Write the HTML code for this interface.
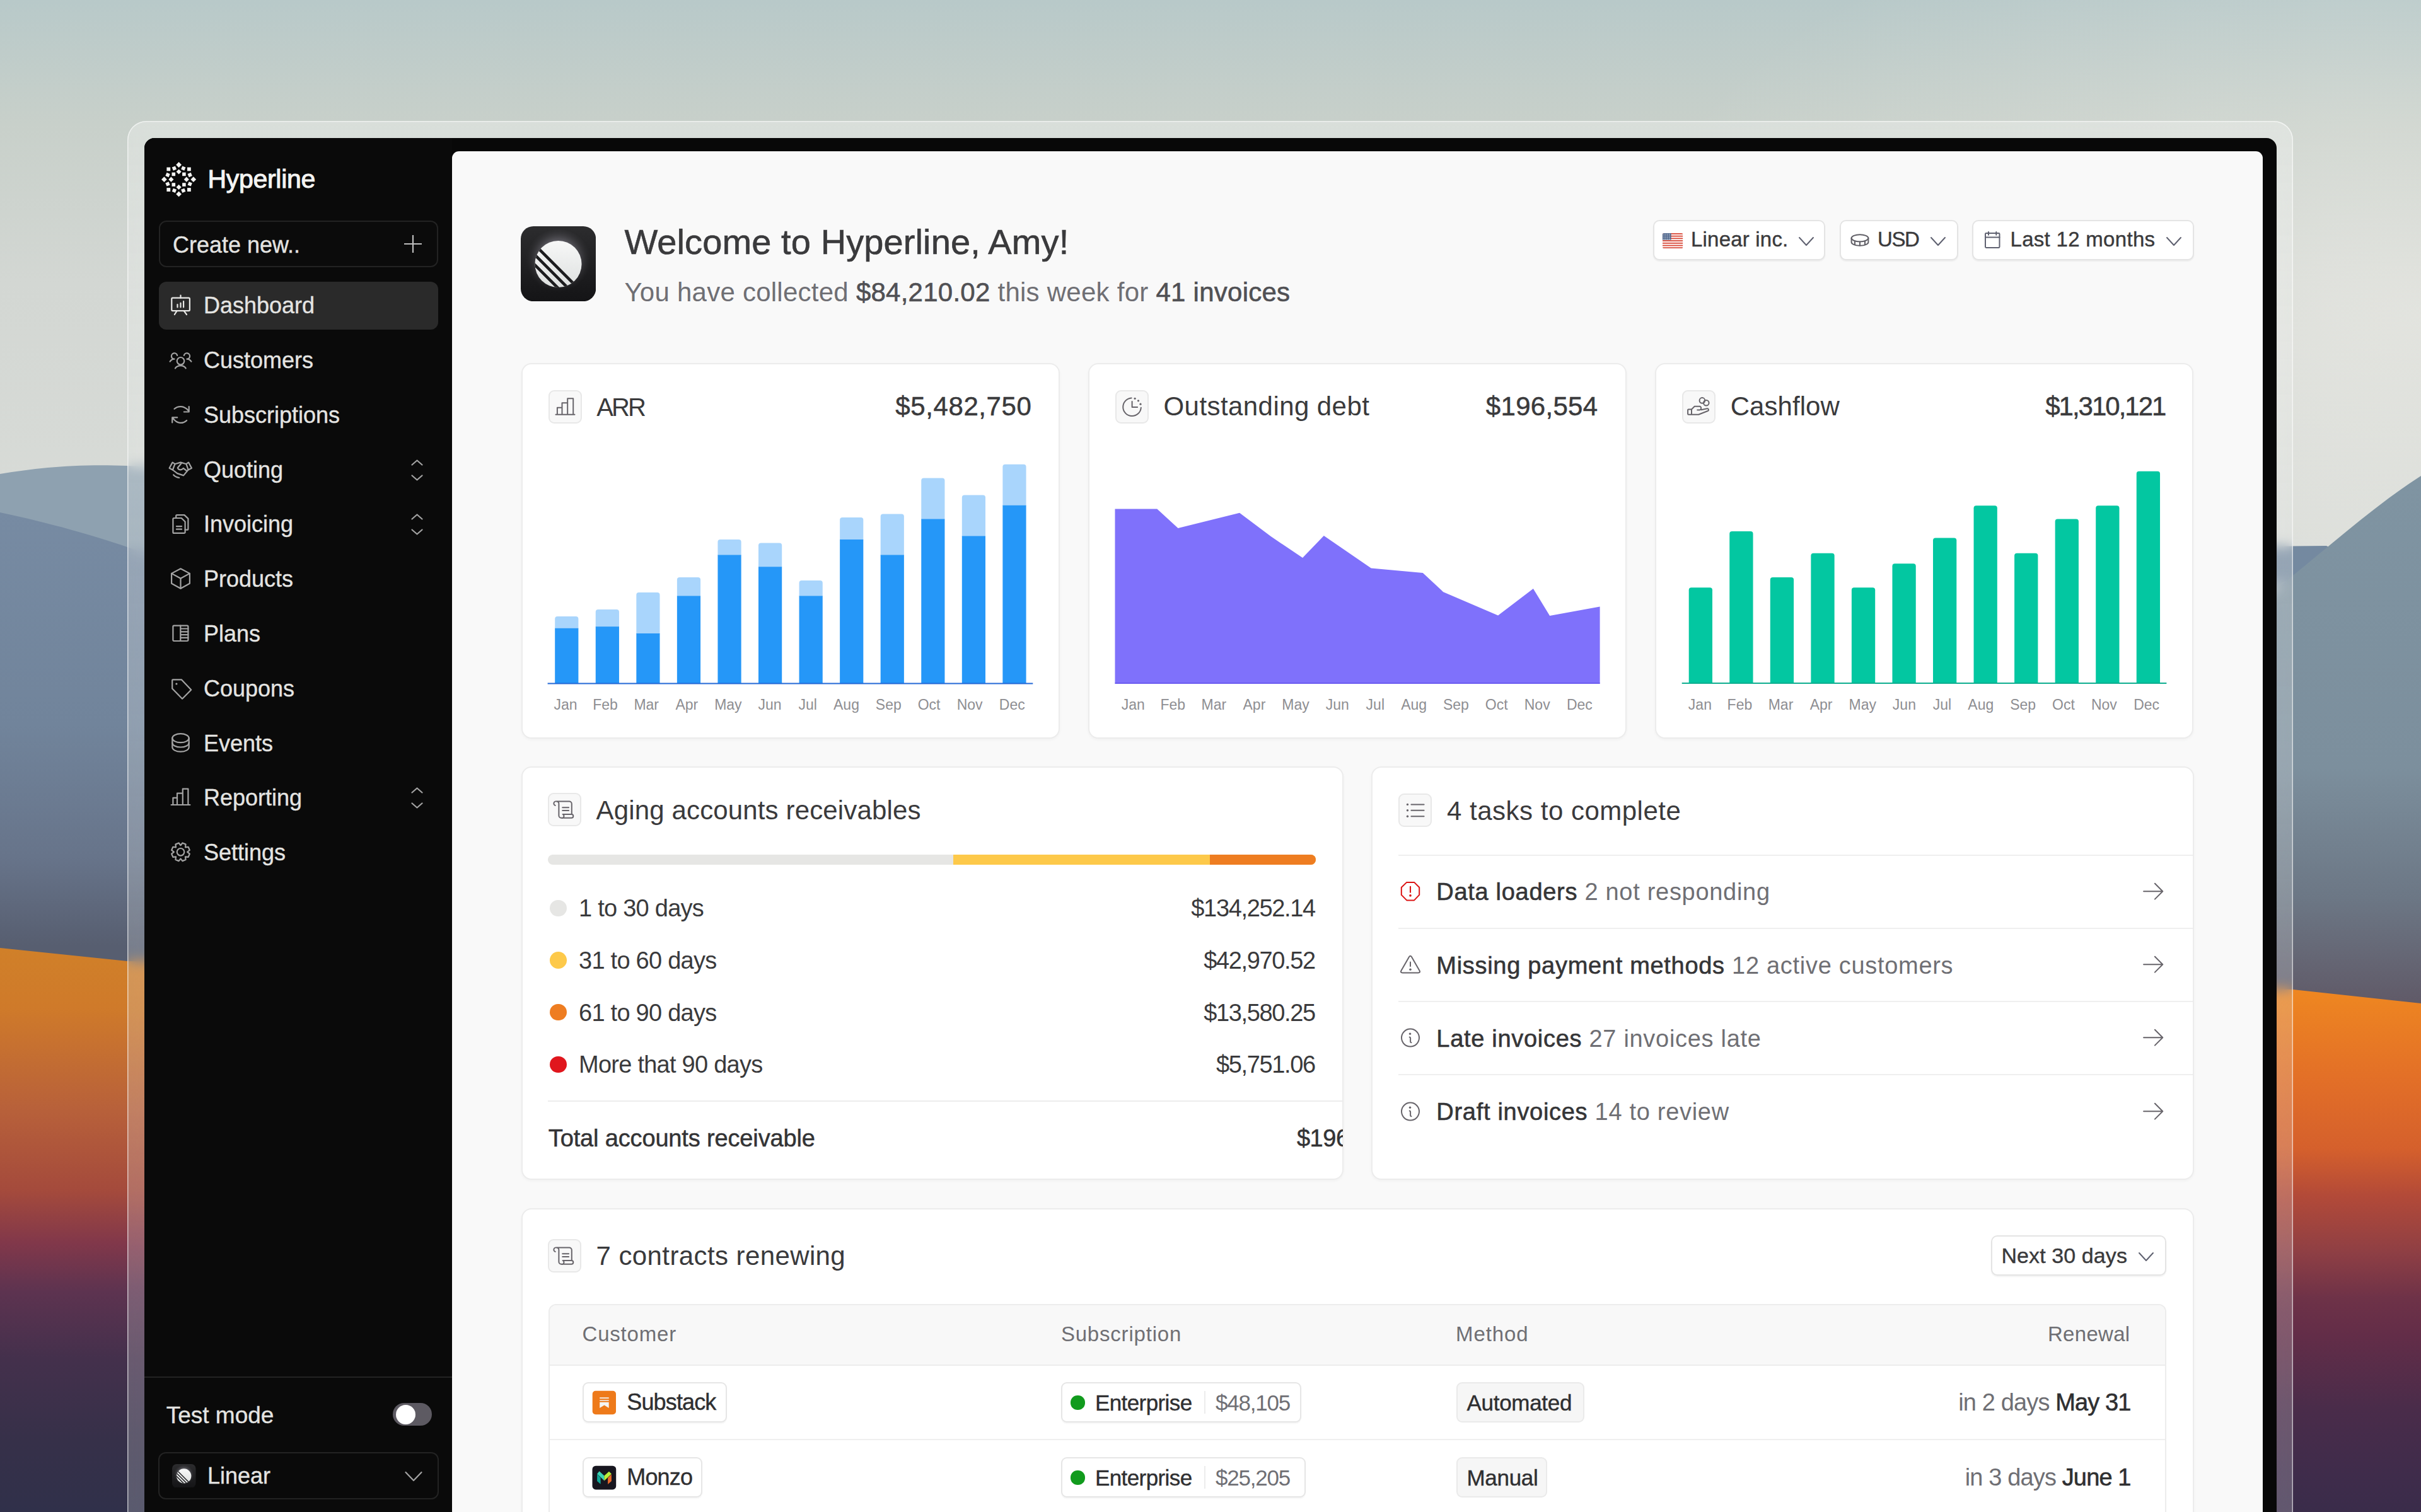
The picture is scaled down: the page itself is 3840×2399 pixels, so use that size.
<!DOCTYPE html>
<html><head><meta charset="utf-8">
<style>
*{box-sizing:border-box;margin:0;padding:0}
html,body{width:3840px;height:2399px;overflow:hidden;position:relative;font-family:"Liberation Sans",sans-serif;background:#c8d0cc}
.abs{position:absolute}
.t{position:absolute;white-space:nowrap}
#frame{position:absolute;left:202px;top:192px;width:3435px;height:2400px;border-radius:30px;background:linear-gradient(rgba(242,244,242,0.4),rgba(228,231,230,0.3) 700px,rgba(225,228,228,0.24) 1400px);backdrop-filter:blur(10px);-webkit-backdrop-filter:blur(10px);box-shadow:inset 0 0 0 1.5px rgba(255,255,255,0.6)}
#black{position:absolute;left:229px;top:219px;width:3382px;height:2400px;border-radius:16px;background:#080808}
#side{position:absolute;left:229px;top:219px;width:488px;height:2200px;background:#0a0a0a;border-radius:16px 0 0 0}
#main{position:absolute;left:717px;top:240px;width:2872px;height:2400px;border-radius:11px 11px 0 0;background:#f9f9f9}
</style></head><body>
<svg class="abs" style="left:0;top:0" width="3840" height="2399" viewBox="0 0 3840 2399">
<defs>
<linearGradient id="sky" gradientUnits="userSpaceOnUse" x1="0" y1="0" x2="0" y2="900">
<stop offset="0" stop-color="#b8c9c9"/><stop offset="0.22" stop-color="#c8d0ca"/><stop offset="0.5" stop-color="#d3d7d3"/><stop offset="1" stop-color="#d9dcd8"/>
</linearGradient>
<radialGradient id="skyr" gradientUnits="userSpaceOnUse" cx="3840" cy="500" r="1300" gradientTransform="translate(3840 500) scale(1 0.55) translate(-3840 -500)">
<stop offset="0" stop-color="#f4f2ec" stop-opacity="0.45"/><stop offset="0.6" stop-color="#f4f2ec" stop-opacity="0.15"/><stop offset="1" stop-color="#f4f2ec" stop-opacity="0"/>
</radialGradient>
<linearGradient id="hillL" gradientUnits="userSpaceOnUse" x1="0" y1="800" x2="0" y2="1500">
<stop offset="0" stop-color="#778ba3"/><stop offset="0.5" stop-color="#71849b"/><stop offset="0.8" stop-color="#67748a"/><stop offset="1" stop-color="#575e70"/>
</linearGradient>
<linearGradient id="hillR" gradientUnits="userSpaceOnUse" x1="0" y1="760" x2="0" y2="1590">
<stop offset="0" stop-color="#7f94a2"/><stop offset="0.55" stop-color="#7c8f9d"/><stop offset="0.8" stop-color="#6c7785"/><stop offset="1" stop-color="#605a68"/>
</linearGradient>
<linearGradient id="duneL" gradientUnits="userSpaceOnUse" x1="0" y1="1500" x2="0" y2="2399">
<stop offset="0" stop-color="#d08029"/><stop offset="0.111" stop-color="#cf7a2a"/><stop offset="0.287" stop-color="#b8613a"/><stop offset="0.434" stop-color="#a44a3c"/><stop offset="0.523" stop-color="#82384a"/><stop offset="0.611" stop-color="#5d3350"/><stop offset="0.729" stop-color="#44304c"/><stop offset="0.875" stop-color="#363049"/><stop offset="1" stop-color="#30304a"/>
</linearGradient>
<linearGradient id="duneR" gradientUnits="userSpaceOnUse" x1="0" y1="1575" x2="0" y2="2399">
<stop offset="0" stop-color="#ee8621"/><stop offset="0.159" stop-color="#e37027"/><stop offset="0.30" stop-color="#d5602c"/><stop offset="0.39" stop-color="#b34a38"/><stop offset="0.498" stop-color="#8f3f44"/><stop offset="0.589" stop-color="#6e3248"/><stop offset="0.659" stop-color="#632d48"/><stop offset="0.80" stop-color="#4a2c4a"/><stop offset="0.929" stop-color="#3f2c4b"/><stop offset="1" stop-color="#3a2c4a"/>
</linearGradient>
</defs>
<rect width="3840" height="2399" fill="url(#sky)"/>
<rect x="2400" width="1440" height="1200" fill="url(#skyr)"/>
<path d="M0 752 C60 742 120 736 202 739 C400 745 600 780 800 840 L800 2399 L0 2399Z" fill="#8ea1b0"/>
<path d="M0 813 C80 830 150 850 202 868 C400 930 600 1050 800 1200 L800 2399 L0 2399Z" fill="url(#hillL)"/>
<path d="M3300 870 L3690 866 C3720 880 3700 900 3637 920 L3300 1000Z" fill="#7489a0"/>
<path d="M3000 1300 C3300 1100 3560 980 3637 913 C3700 862 3770 800 3840 755 L3840 2399 L3000 2399Z" fill="url(#hillR)"/>
<path d="M0 1504 L202 1525 L2000 1548 L2000 2399 L0 2399Z" fill="url(#duneL)"/>
<path d="M2000 1545 L3637 1570 L3840 1592 L3840 2399 L2000 2399Z" fill="url(#duneR)"/>
</svg>

<div id="frame"></div>
<div id="black"></div>
<div id="side"></div>
<div id="main"></div>
<svg class="abs" style="left:0;top:0" width="3840" height="600" viewBox="0 0 3840 600"><g fill="#f4f4f2"><rect x="280.50" y="258.40" width="6.2" height="6.2" transform="rotate(45 283.60 261.50)"/><rect x="303.70" y="281.60" width="6.2" height="6.2" transform="rotate(45 306.80 284.70)"/><rect x="280.50" y="304.80" width="6.2" height="6.2" transform="rotate(45 283.60 307.90)"/><rect x="257.30" y="281.60" width="6.2" height="6.2" transform="rotate(45 260.40 284.70)"/><rect x="297.00" y="298.10" width="5.8" height="5.8" transform="rotate(0 299.90 301.00)"/><rect x="264.40" y="298.10" width="5.8" height="5.8" transform="rotate(0 267.30 301.00)"/><rect x="297.00" y="265.50" width="5.8" height="5.8" transform="rotate(0 299.90 268.40)"/><rect x="264.40" y="265.50" width="5.8" height="5.8" transform="rotate(0 267.30 268.40)"/><rect x="288.00" y="264.30" width="5.6" height="5.6" transform="rotate(22.5 290.80 267.10)"/><rect x="273.60" y="264.30" width="5.6" height="5.6" transform="rotate(-22.5 276.40 267.10)"/><rect x="288.00" y="299.50" width="5.6" height="5.6" transform="rotate(-22.5 290.80 302.30)"/><rect x="273.60" y="299.50" width="5.6" height="5.6" transform="rotate(22.5 276.40 302.30)"/><rect x="298.40" y="289.10" width="5.6" height="5.6" transform="rotate(22.5 301.20 291.90)"/><rect x="298.40" y="274.70" width="5.6" height="5.6" transform="rotate(-22.5 301.20 277.50)"/><rect x="263.20" y="289.10" width="5.6" height="5.6" transform="rotate(-22.5 266.00 291.90)"/><rect x="263.20" y="274.70" width="5.6" height="5.6" transform="rotate(22.5 266.00 277.50)"/><rect x="280.70" y="269.60" width="5.8" height="5.8" transform="rotate(45 283.60 272.50)"/><rect x="292.90" y="281.80" width="5.8" height="5.8" transform="rotate(45 295.80 284.70)"/><rect x="280.70" y="294.00" width="5.8" height="5.8" transform="rotate(45 283.60 296.90)"/><rect x="268.50" y="281.80" width="5.8" height="5.8" transform="rotate(45 271.40 284.70)"/><rect x="289.10" y="290.20" width="5.6" height="5.6" transform="rotate(0 291.90 293.00)"/><rect x="272.50" y="290.20" width="5.6" height="5.6" transform="rotate(0 275.30 293.00)"/><rect x="289.10" y="273.60" width="5.6" height="5.6" transform="rotate(0 291.90 276.40)"/><rect x="272.50" y="273.60" width="5.6" height="5.6" transform="rotate(0 275.30 276.40)"/></g></svg>
<div class="t" style="top:263.7px;font-size:41px;line-height:41px;color:#f4f4f2;letter-spacing:-0.3px;left:329.5px;-webkit-text-stroke:1px #f4f4f2">Hyperline</div>
<div class="abs" style="left:252.0px;top:350.0px;width:443.0px;height:74.0px;border:2px solid #232323;border-radius:12px;background:#0b0b0b"></div>
<div class="t" style="top:370.5px;font-size:36px;line-height:36px;color:#e4e4e2;left:274.0px;-webkit-text-stroke:0.35px #e4e4e2">Create new..</div>
<svg class="abs" style="left:639.0px;top:371.0px;" width="32" height="32" viewBox="0 0 32 32"><path d="M16 2V30M2 16H30" stroke="#bdbdbd" stroke-width="2.2" fill="none"/></svg>
<div class="abs" style="left:252.0px;top:447.0px;width:443.0px;height:76.0px;background:#2a2a2a;border-radius:12px"></div>
<svg class="abs" style="left:262.0px;top:460.0px;" width="50" height="50" viewBox="0 0 50 50"><g fill="none" stroke="#e8e8e6" stroke-width="2.2" stroke-linecap="round" stroke-linejoin="round"><rect x="10.3" y="12.7" width="28.6" height="20.4" rx="1.5"/><path d="M24.5 8.6V12.7M19.5 23.1V27.4M24.5 20.8V27.4M29.1 18V27.4M18.5 33.4L14.9 39M29.8 33.4L34 39"/></g></svg>
<div class="t" style="top:467.1px;font-size:36px;line-height:36px;color:#e4e4e2;left:323.0px;-webkit-text-stroke:0.35px #e4e4e2">Dashboard</div>
<svg class="abs" style="left:262.0px;top:547.0px;" width="50" height="50" viewBox="0 0 50 50"><g fill="none" stroke="#a3a3a3" stroke-width="2.2" stroke-linecap="round" stroke-linejoin="round"><circle cx="24.5" cy="25.8" r="5.8"/><path d="M15.9 37.4C18 34.5 21 33.2 24.5 33.2C28 33.2 31 34.5 32.7 37.4"/><path d="M19.2 16.9A4.7 4.7 0 1 0 14.6 22.7C11.6 22.7 9.3 24.2 7.6 26.6"/><path d="M29.8 16.9A4.7 4.7 0 1 1 34.4 22.7C37.4 22.7 39.7 24.2 41.4 26.6"/></g></svg>
<div class="t" style="top:553.9px;font-size:36px;line-height:36px;color:#e4e4e2;left:323.0px;-webkit-text-stroke:0.35px #e4e4e2">Customers</div>
<svg class="abs" style="left:262.0px;top:634.0px;" width="50" height="50" viewBox="0 0 50 50"><g fill="none" stroke="#a3a3a3" stroke-width="2.2" stroke-linecap="round" stroke-linejoin="round"><path d="M14.5 14.8C20.5 9.5 30 9.5 36.5 17.2M37.7 11.2V19.5H29.8"/><path d="M34.1 33.1C28 38.8 18.5 38.5 12.6 29.9M11.2 36.4V28.4H19.2"/></g></svg>
<div class="t" style="top:640.7px;font-size:36px;line-height:36px;color:#e4e4e2;left:323.0px;-webkit-text-stroke:0.35px #e4e4e2">Subscriptions</div>
<svg class="abs" style="left:262.0px;top:720.0px;" width="50" height="50" viewBox="0 0 50 50"><g fill="none" stroke="#a3a3a3" stroke-width="2.2" stroke-linecap="round" stroke-linejoin="round"><path d="M11.6 13.6L6.6 22.8L11.9 25.5L15.5 16.2Z M37 13.6L42 22.8L36.6 25.5L33.4 16.2Z"/><path d="M15.5 16.2L24.5 13.6L33.4 16.2"/><path d="M25.5 15.3L19.8 22.3C20.8 26.2 26 26.2 28.8 23L34.7 27.4"/><path d="M11.9 25.5L19.2 31.1L29.1 34.4L36.4 25.5"/><path d="M13.2 33.4C15.5 36 18.5 37.3 22.2 38"/></g></svg>
<div class="t" style="top:727.5px;font-size:36px;line-height:36px;color:#e4e4e2;left:323.0px;-webkit-text-stroke:0.35px #e4e4e2">Quoting</div>
<svg class="abs" style="left:650.5px;top:728.5px;" width="21" height="34" viewBox="0 0 21 34"><path d="M2.5 8.5L10.5 1.5L18.5 8.5M2.5 25.5L10.5 32.5L18.5 25.5" fill="none" stroke="#a3a3a3" stroke-width="2.2" stroke-linecap="round" stroke-linejoin="round"/></svg>
<svg class="abs" style="left:262.0px;top:807.0px;" width="50" height="50" viewBox="0 0 50 50"><g fill="none" stroke="#a3a3a3" stroke-width="2.2" stroke-linecap="round" stroke-linejoin="round"><path d="M12.4 16.5V37.4A1.5 1.5 0 0 0 13.9 38.9H30.1A1.5 1.5 0 0 0 31.6 37.4V20.8L25.8 15H13.9A1.5 1.5 0 0 0 12.4 16.5Z"/><path d="M17.2 15V11.6A1.5 1.5 0 0 1 18.7 10.1H30.4L36.4 15.9V32.2A1.5 1.5 0 0 1 34.9 33.7H31.6"/><path d="M17.9 28.1H26.1M17.9 32.7H26.1"/></g></svg>
<div class="t" style="top:814.3px;font-size:36px;line-height:36px;color:#e4e4e2;left:323.0px;-webkit-text-stroke:0.35px #e4e4e2">Invoicing</div>
<svg class="abs" style="left:650.5px;top:815.3px;" width="21" height="34" viewBox="0 0 21 34"><path d="M2.5 8.5L10.5 1.5L18.5 8.5M2.5 25.5L10.5 32.5L18.5 25.5" fill="none" stroke="#a3a3a3" stroke-width="2.2" stroke-linecap="round" stroke-linejoin="round"/></svg>
<svg class="abs" style="left:262.0px;top:894.0px;" width="50" height="50" viewBox="0 0 50 50"><g fill="none" stroke="#a3a3a3" stroke-width="2.2" stroke-linecap="round" stroke-linejoin="round"><path d="M24.5 8.3L38.9 15.9V31.7L24.5 39.7L10.1 31.7V15.9Z"/><path d="M10.1 15.9L24.5 23.8L38.9 15.9M24.5 23.8V39.7"/></g></svg>
<div class="t" style="top:901.1px;font-size:36px;line-height:36px;color:#e4e4e2;left:323.0px;-webkit-text-stroke:0.35px #e4e4e2">Products</div>
<svg class="abs" style="left:262.0px;top:981.0px;" width="50" height="50" viewBox="0 0 50 50"><g fill="none" stroke="#a3a3a3" stroke-width="2.2" stroke-linecap="round" stroke-linejoin="round"><rect x="12.4" y="11.7" width="24" height="24.3" rx="1.5"/><path d="M24.3 11.7V36M24.3 16.5H36.4M24.3 21.3H36.4M24.3 26.1H36.4M24.3 30.8H36.4"/></g></svg>
<div class="t" style="top:987.9px;font-size:36px;line-height:36px;color:#e4e4e2;left:323.0px;-webkit-text-stroke:0.35px #e4e4e2">Plans</div>
<svg class="abs" style="left:262.0px;top:1068.0px;" width="50" height="50" viewBox="0 0 50 50"><g fill="none" stroke="#a3a3a3" stroke-width="2.2" stroke-linecap="round" stroke-linejoin="round"><path d="M11.2 11.3A1 1 0 0 1 12.2 10.3H25.8L41.2 26.5L27.1 40.7L11.2 24.5Z"/><circle cx="17.9" cy="17" r="1.6" fill="#a3a3a3" stroke="none"/></g></svg>
<div class="t" style="top:1074.7px;font-size:36px;line-height:36px;color:#e4e4e2;left:323.0px;-webkit-text-stroke:0.35px #e4e4e2">Coupons</div>
<svg class="abs" style="left:262.0px;top:1155.0px;" width="50" height="50" viewBox="0 0 50 50"><g fill="none" stroke="#a3a3a3" stroke-width="2.2" stroke-linecap="round" stroke-linejoin="round"><ellipse cx="24.5" cy="16.2" rx="13.2" ry="7"/><path d="M11.3 16.2V30.6C11.3 34.5 17.2 37.7 24.5 37.7C31.8 37.7 37.7 34.5 37.7 30.6V16.2"/><path d="M11.3 23.4C11.3 27.3 17.2 30.5 24.5 30.5C31.8 30.5 37.7 27.3 37.7 23.4"/></g></svg>
<div class="t" style="top:1161.5px;font-size:36px;line-height:36px;color:#e4e4e2;left:323.0px;-webkit-text-stroke:0.35px #e4e4e2">Events</div>
<svg class="abs" style="left:262.0px;top:1242.0px;" width="50" height="50" viewBox="0 0 50 50"><g fill="none" stroke="#a3a3a3" stroke-width="2.2" stroke-linecap="round" stroke-linejoin="round"><path d="M9.6 35H39.4M12.4 35V23.8H19V35M19 35V16.7H27.8V35M27.8 35V9.6H36.4V35"/></g></svg>
<div class="t" style="top:1248.3px;font-size:36px;line-height:36px;color:#e4e4e2;left:323.0px;-webkit-text-stroke:0.35px #e4e4e2">Reporting</div>
<svg class="abs" style="left:650.5px;top:1249.3px;" width="21" height="34" viewBox="0 0 21 34"><path d="M2.5 8.5L10.5 1.5L18.5 8.5M2.5 25.5L10.5 32.5L18.5 25.5" fill="none" stroke="#a3a3a3" stroke-width="2.2" stroke-linecap="round" stroke-linejoin="round"/></svg>
<svg class="abs" style="left:262.0px;top:1328.0px;" width="50" height="50" viewBox="0 0 50 50"><g fill="none" stroke="#a3a3a3" stroke-width="2.2" stroke-linecap="round" stroke-linejoin="round"><circle cx="24.5" cy="23.8" r="5.8"/><path d="M24.50 13.20 L27.41 9.49 L32.56 11.63 L32.00 16.30 L36.67 15.74 L38.81 20.89 L35.10 23.80 L38.81 26.71 L36.67 31.86 L32.00 31.30 L32.56 35.97 L27.41 38.11 L24.50 34.40 L21.59 38.11 L16.44 35.97 L17.00 31.30 L12.33 31.86 L10.19 26.71 L13.90 23.80 L10.19 20.89 L12.33 15.74 L17.00 16.30 L16.44 11.63 L21.59 9.49Z"/></g></svg>
<div class="t" style="top:1335.1px;font-size:36px;line-height:36px;color:#e4e4e2;left:323.0px;-webkit-text-stroke:0.35px #e4e4e2">Settings</div>
<div class="abs" style="left:229.0px;top:2184.0px;width:488.0px;height:2.0px;background:#232323"></div>
<div class="t" style="top:2226.5px;font-size:37px;line-height:37px;color:#e4e4e2;left:263.7px;-webkit-text-stroke:0.35px #e4e4e2">Test mode</div>
<div class="abs" style="left:623.0px;top:2226.0px;width:62.0px;height:36.0px;background:#5d5a62;border-radius:18px"></div>
<div class="abs" style="left:628.0px;top:2229.0px;width:31.0px;height:31.0px;background:#ffffff;border-radius:50%"></div>
<div class="abs" style="left:251.0px;top:2304.0px;width:445.0px;height:75.0px;border:2px solid #232323;border-radius:12px"></div>
<svg class="abs" style="left:273.0px;top:2322.7px;" width="37.5" height="37.5" viewBox="0 0 119 119"><defs><linearGradient id="lga" x1="0" y1="0" x2="0" y2="1"><stop offset="0" stop-color="#2c2c2e"/><stop offset="1" stop-color="#141416"/></linearGradient>
<radialGradient id="rga" cx="0.5" cy="0.45" r="0.5"><stop offset="0.55" stop-color="#6a6870" stop-opacity="0.8"/><stop offset="1" stop-color="#2a2a2c" stop-opacity="0"/></radialGradient>
<linearGradient id="cga" x1="0" y1="0" x2="0" y2="1"><stop offset="0" stop-color="#ffffff"/><stop offset="1" stop-color="#d6d9d8"/></linearGradient>
<clipPath id="cca"><circle cx="59.4" cy="59.9" r="37"/></clipPath></defs>
<rect width="119" height="119" rx="22.2" fill="url(#lga)"/>
<circle cx="59.4" cy="57" r="52" fill="url(#rga)"/>
<g clip-path="url(#cca)"><rect width="119" height="119" fill="url(#cga)"/>
<g stroke="#1c1c1e" stroke-width="4.6" transform="rotate(45 59.4 59.9)">
<path d="M0 64.65 H119 M0 75.85 H119 M0 87.05 H119"/></g></g></svg>
<div class="t" style="top:2324.1px;font-size:36px;line-height:36px;color:#e4e4e2;left:329.0px;-webkit-text-stroke:0.35px #e4e4e2">Linear</div>
<svg class="abs" style="left:641.0px;top:2333.0px;" width="30" height="20" viewBox="0 0 30 20"><path d="M2.5 3L15 16L27.5 3" fill="none" stroke="#a3a3a3" stroke-width="2.2" stroke-linecap="round" stroke-linejoin="round"/></svg>

<svg class="abs" style="left:825.8px;top:358.9px;" width="119.2" height="119.2" viewBox="0 0 119 119"><defs><linearGradient id="lgh" x1="0" y1="0" x2="0" y2="1"><stop offset="0" stop-color="#2c2c2e"/><stop offset="1" stop-color="#141416"/></linearGradient>
<radialGradient id="rgh" cx="0.5" cy="0.45" r="0.5"><stop offset="0.55" stop-color="#6a6870" stop-opacity="0.8"/><stop offset="1" stop-color="#2a2a2c" stop-opacity="0"/></radialGradient>
<linearGradient id="cgh" x1="0" y1="0" x2="0" y2="1"><stop offset="0" stop-color="#ffffff"/><stop offset="1" stop-color="#d6d9d8"/></linearGradient>
<clipPath id="cch"><circle cx="59.4" cy="59.9" r="37"/></clipPath></defs>
<rect width="119" height="119" rx="20.0" fill="url(#lgh)"/>
<circle cx="59.4" cy="57" r="52" fill="url(#rgh)"/>
<g clip-path="url(#cch)"><rect width="119" height="119" fill="url(#cgh)"/>
<g stroke="#1c1c1e" stroke-width="4.6" transform="rotate(45 59.4 59.9)">
<path d="M0 64.65 H119 M0 75.85 H119 M0 87.05 H119"/></g></g></svg>
<div class="t" style="top:356.2px;font-size:56px;line-height:56px;color:#3a3a3c;letter-spacing:0.1px;left:990.4px;-webkit-text-stroke:0.6px #3a3a3c">Welcome to Hyperline, Amy!</div>
<div class="t" style="top:442.6px;font-size:42px;line-height:42px;color:#6f6f74;letter-spacing:0.25px;left:990.4px;">You have collected <span style="color:#505054;-webkit-text-stroke:0.6px #505054">$84,210.02</span> this week for <span style="color:#505054;-webkit-text-stroke:0.6px #505054">41 invoices</span></div>
<div class="abs" style="left:2622.0px;top:349.0px;width:273.0px;height:64.0px;background:#ffffff;border:2px solid #e4e4e4;border-radius:10px;box-shadow:0 2px 2px rgba(0,0,0,0.05)"></div>
<svg class="abs" style="left:2637.2px;top:370.2px;" width="32.4" height="24.2" viewBox="0 0 32.4 24.2"><clipPath id="fc"><rect width="32.4" height="24.2" rx="2.5"/></clipPath><g clip-path="url(#fc)"><rect x="0" y="0" width="32.4" height="24.2" rx="2" fill="#fff"/><rect x="0" y="0.00" width="32.4" height="1.86" fill="#d94a3a"/><rect x="0" y="3.72" width="32.4" height="1.86" fill="#d94a3a"/><rect x="0" y="7.44" width="32.4" height="1.86" fill="#d94a3a"/><rect x="0" y="11.16" width="32.4" height="1.86" fill="#d94a3a"/><rect x="0" y="14.88" width="32.4" height="1.86" fill="#d94a3a"/><rect x="0" y="18.60" width="32.4" height="1.86" fill="#d94a3a"/><rect x="0" y="22.32" width="32.4" height="1.86" fill="#d94a3a"/><rect x="0" y="0" width="13.6" height="10.6" fill="#4a6289"/><rect x="1.6" y="1.3" width="1.3" height="1.1" fill="#fff"/><rect x="4.6" y="1.3" width="1.3" height="1.1" fill="#fff"/><rect x="7.6" y="1.3" width="1.3" height="1.1" fill="#fff"/><rect x="10.6" y="1.3" width="1.3" height="1.1" fill="#fff"/><rect x="1.6" y="3.8" width="1.3" height="1.1" fill="#fff"/><rect x="4.6" y="3.8" width="1.3" height="1.1" fill="#fff"/><rect x="7.6" y="3.8" width="1.3" height="1.1" fill="#fff"/><rect x="10.6" y="3.8" width="1.3" height="1.1" fill="#fff"/><rect x="1.6" y="6.3" width="1.3" height="1.1" fill="#fff"/><rect x="4.6" y="6.3" width="1.3" height="1.1" fill="#fff"/><rect x="7.6" y="6.3" width="1.3" height="1.1" fill="#fff"/><rect x="10.6" y="6.3" width="1.3" height="1.1" fill="#fff"/><rect x="1.6" y="8.8" width="1.3" height="1.1" fill="#fff"/><rect x="4.6" y="8.8" width="1.3" height="1.1" fill="#fff"/><rect x="7.6" y="8.8" width="1.3" height="1.1" fill="#fff"/><rect x="10.6" y="8.8" width="1.3" height="1.1" fill="#fff"/></g></svg>
<div class="t" style="top:363.4px;font-size:33px;line-height:33px;color:#3a3a3c;letter-spacing:0.2px;left:2682.0px;-webkit-text-stroke:0.4px #3a3a3c">Linear inc.</div>
<svg class="abs" style="left:2852.0px;top:375.0px;" width="26" height="16" viewBox="0 0 26 16"><path d="M2 2L13.0 14L24 2" fill="none" stroke="#5f6170" stroke-width="2" stroke-linecap="round" stroke-linejoin="round"/></svg>
<div class="abs" style="left:2918.0px;top:349.0px;width:188.0px;height:64.0px;background:#ffffff;border:2px solid #e4e4e4;border-radius:10px;box-shadow:0 2px 2px rgba(0,0,0,0.05)"></div>
<svg class="abs" style="left:2925.0px;top:355.0px;" width="50" height="50" viewBox="0 0 50 50"><g fill="none" stroke="#605f66" stroke-width="2" stroke-linecap="round"><ellipse cx="25" cy="22.8" rx="13.4" ry="5.6"/><path d="M11.6 22.8V29.2C11.6 32.3 17.6 34.8 25 34.8C32.4 34.8 38.4 32.3 38.4 29.2V22.8M17 28.2V34M25 28.6V35M33 28.2V34"/></g></svg>
<div class="t" style="top:363.4px;font-size:33px;line-height:33px;color:#3a3a3c;letter-spacing:-1.4px;left:2978.0px;-webkit-text-stroke:0.4px #3a3a3c">USD</div>
<svg class="abs" style="left:3061.0px;top:375.0px;" width="26" height="16" viewBox="0 0 26 16"><path d="M2 2L13.0 14L24 2" fill="none" stroke="#5f6170" stroke-width="2" stroke-linecap="round" stroke-linejoin="round"/></svg>
<div class="abs" style="left:3128.0px;top:349.0px;width:352.0px;height:64.0px;background:#ffffff;border:2px solid #e4e4e4;border-radius:10px;box-shadow:0 2px 2px rgba(0,0,0,0.05)"></div>
<svg class="abs" style="left:3135.0px;top:355.0px;" width="50" height="50" viewBox="0 0 50 50"><g fill="none" stroke="#5f6170" stroke-width="2" stroke-linecap="round"><rect x="14" y="15" width="22.5" height="22.9" rx="1.3"/><path d="M14 21.5H36.5M19 12.9V17.7M31.3 12.9V17.7"/></g></svg>
<div class="t" style="top:363.4px;font-size:33px;line-height:33px;color:#3a3a3c;letter-spacing:0.3px;left:3188.5px;-webkit-text-stroke:0.4px #3a3a3c">Last 12 months</div>
<svg class="abs" style="left:3435.0px;top:375.0px;" width="26" height="16" viewBox="0 0 26 16"><path d="M2 2L13.0 14L24 2" fill="none" stroke="#5f6170" stroke-width="2" stroke-linecap="round" stroke-linejoin="round"/></svg>
<div class="abs" style="left:826.5px;top:575.5px;width:854.1px;height:596.5px;background:#ffffff;border:2px solid #ececec;border-radius:16px;box-shadow:0 2px 4px rgba(0,0,0,0.035);"></div>
<div class="abs" style="left:869.5px;top:618.6px;width:53.0px;height:53.0px;background:#f8f8f8;border:2px solid #e8e8e8;border-radius:9px"></div>
<svg class="abs" style="left:869.5px;top:618.6px;" width="53" height="53" viewBox="0 0 53 53"><g fill="none" stroke="#67646a" stroke-width="2" stroke-linecap="round" stroke-linejoin="round"><path d="M13.9 38.8V27.7H21.5V38.8M21.5 38.8V20.2H30.2V38.8M30.2 38.8V13.2H39.2V38.8M11.5 38.8H41.5"/></g></svg>
<div class="t" style="top:626.1px;font-size:40px;line-height:40px;color:#3a3a3c;letter-spacing:-2.9px;left:946.3px;">ARR</div>
<div class="t" style="top:624.4px;font-size:42px;line-height:42px;color:#3a3a3c;letter-spacing:0.6px;right:2203.5px;-webkit-text-stroke:0.5px #3a3a3c">$5,482,750</div>
<div class="abs" style="left:1725.8px;top:575.5px;width:854.5px;height:596.5px;background:#ffffff;border:2px solid #ececec;border-radius:16px;box-shadow:0 2px 4px rgba(0,0,0,0.035);"></div>
<div class="abs" style="left:1769.0px;top:618.6px;width:53.0px;height:53.0px;background:#f8f8f8;border:2px solid #e8e8e8;border-radius:9px"></div>
<svg class="abs" style="left:1769.0px;top:618.6px;" width="53" height="53" viewBox="0 0 53 53"><g fill="none" stroke="#67646a" stroke-width="2" stroke-linecap="round" stroke-linejoin="round"><path d="M25.6 12.5A14.3 14.3 0 1 0 40.8 27.7M26.6 18V27H35.1"/><circle cx="31.1" cy="13.3" r="1.6" fill="#67646a" stroke="none"/><circle cx="36.5" cy="16.8" r="1.6" fill="#67646a" stroke="none"/><circle cx="40" cy="22.2" r="1.6" fill="#67646a" stroke="none"/></g></svg>
<div class="t" style="top:624.4px;font-size:42px;line-height:42px;color:#3a3a3c;letter-spacing:0.43px;left:1845.5px;">Outstanding debt</div>
<div class="t" style="top:624.4px;font-size:42px;line-height:42px;color:#3a3a3c;letter-spacing:0.3px;right:1305.6px;-webkit-text-stroke:0.5px #3a3a3c">$196,554</div>
<div class="abs" style="left:2625.4px;top:575.5px;width:854.1px;height:596.5px;background:#ffffff;border:2px solid #ececec;border-radius:16px;box-shadow:0 2px 4px rgba(0,0,0,0.035);"></div>
<div class="abs" style="left:2668.0px;top:618.6px;width:53.0px;height:53.0px;background:#f8f8f8;border:2px solid #e8e8e8;border-radius:9px"></div>
<svg class="abs" style="left:2668.0px;top:618.6px;" width="53" height="53" viewBox="0 0 53 53"><g fill="none" stroke="#67646a" stroke-width="2" stroke-linecap="round" stroke-linejoin="round"><circle cx="31.9" cy="16.4" r="4.3"/><circle cx="38.3" cy="20.2" r="4.3"/><path d="M10.1 30.5H15V38.7H10.1A1 1 0 0 1 9.1 37.7V31.5A1 1 0 0 1 10.1 30.5ZM15 30.5L19.8 25.8H28.3A3 3 0 0 1 28.3 31.4H24.2M15 38.7H26.2L40.8 33A2 2 0 0 0 39.7 29.2L30.5 31.2"/></g></svg>
<div class="t" style="top:624.4px;font-size:42px;line-height:42px;color:#3a3a3c;letter-spacing:0.05px;left:2744.7px;">Cashflow</div>
<div class="t" style="top:624.4px;font-size:42px;line-height:42px;color:#3a3a3c;letter-spacing:-2.0px;right:405.6px;-webkit-text-stroke:0.5px #3a3a3c">$1,310,121</div>
<svg class="abs" style="left:0.0px;top:0.0px;" width="3840" height="1200" viewBox="0 0 3840 1200"><path d="M880.20 997.80V982.00Q880.20 978.00 884.20 978.00H913.40Q917.40 978.00 917.40 982.00V997.80Z" fill="#a9d5fc"/><rect x="880.20" y="996.80" width="37.2" height="87.70" fill="#2597f8"/><path d="M944.76 995.20V971.10Q944.76 967.10 948.76 967.10H977.96Q981.96 967.10 981.96 971.10V995.20Z" fill="#a9d5fc"/><rect x="944.76" y="994.20" width="37.2" height="90.30" fill="#2597f8"/><path d="M1009.32 1006.00V944.00Q1009.32 940.00 1013.32 940.00H1042.52Q1046.52 940.00 1046.52 944.00V1006.00Z" fill="#a9d5fc"/><rect x="1009.32" y="1005.00" width="37.2" height="79.50" fill="#2597f8"/><path d="M1073.88 946.50V919.90Q1073.88 915.90 1077.88 915.90H1107.08Q1111.08 915.90 1111.08 919.90V946.50Z" fill="#a9d5fc"/><rect x="1073.88" y="945.50" width="37.2" height="139.00" fill="#2597f8"/><path d="M1138.44 881.50V860.00Q1138.44 856.00 1142.44 856.00H1171.64Q1175.64 856.00 1175.64 860.00V881.50Z" fill="#a9d5fc"/><rect x="1138.44" y="880.50" width="37.2" height="204.00" fill="#2597f8"/><path d="M1203.00 900.30V865.40Q1203.00 861.40 1207.00 861.40H1236.20Q1240.20 861.40 1240.20 865.40V900.30Z" fill="#a9d5fc"/><rect x="1203.00" y="899.30" width="37.2" height="185.20" fill="#2597f8"/><path d="M1267.56 946.50V925.00Q1267.56 921.00 1271.56 921.00H1300.76Q1304.76 921.00 1304.76 925.00V946.50Z" fill="#a9d5fc"/><rect x="1267.56" y="945.50" width="37.2" height="139.00" fill="#2597f8"/><path d="M1332.12 857.00V825.00Q1332.12 821.00 1336.12 821.00H1365.32Q1369.32 821.00 1369.32 825.00V857.00Z" fill="#a9d5fc"/><rect x="1332.12" y="856.00" width="37.2" height="228.50" fill="#2597f8"/><path d="M1396.68 881.50V819.50Q1396.68 815.50 1400.68 815.50H1429.88Q1433.88 815.50 1433.88 819.50V881.50Z" fill="#a9d5fc"/><rect x="1396.68" y="880.50" width="37.2" height="204.00" fill="#2597f8"/><path d="M1461.24 824.50V762.50Q1461.24 758.50 1465.24 758.50H1494.44Q1498.44 758.50 1498.44 762.50V824.50Z" fill="#a9d5fc"/><rect x="1461.24" y="823.50" width="37.2" height="261.00" fill="#2597f8"/><path d="M1525.80 851.50V789.60Q1525.80 785.60 1529.80 785.60H1559.00Q1563.00 785.60 1563.00 789.60V851.50Z" fill="#a9d5fc"/><rect x="1525.80" y="850.50" width="37.2" height="234.00" fill="#2597f8"/><path d="M1590.36 802.80V740.80Q1590.36 736.80 1594.36 736.80H1623.56Q1627.56 736.80 1627.56 740.80V802.80Z" fill="#a9d5fc"/><rect x="1590.36" y="801.80" width="37.2" height="282.70" fill="#2597f8"/><rect x="868.6" y="1083.5" width="769.7" height="2" fill="#2469d6"/><g font-family="Liberation Sans" font-size="23" fill="#8e8e92"><text x="897.1" y="1126" text-anchor="middle">Jan</text><text x="960.1" y="1126" text-anchor="middle">Feb</text><text x="1025.2" y="1126" text-anchor="middle">Mar</text><text x="1089.3" y="1126" text-anchor="middle">Apr</text><text x="1154.9" y="1126" text-anchor="middle">May</text><text x="1221.1" y="1126" text-anchor="middle">Jun</text><text x="1281.2" y="1126" text-anchor="middle">Jul</text><text x="1342.5" y="1126" text-anchor="middle">Aug</text><text x="1409.3" y="1126" text-anchor="middle">Sep</text><text x="1473.6" y="1126" text-anchor="middle">Oct</text><text x="1538.1" y="1126" text-anchor="middle">Nov</text><text x="1605.3" y="1126" text-anchor="middle">Dec</text></g><polygon points="1768.5,807.6 1835.3,807.6 1868.5,838.0 1966.1,813.8 2015.7,851.1 2066.1,885.1 2099.8,849.9 2174.8,901.5 2256.8,908.9 2289.2,939.2 2376.1,976.6 2431.9,933.9 2458.1,977.0 2537.6,962.6 2537.6,1084.6 1768.5,1084.6" fill="#7f71fb"/><rect x="1768.5" y="1083" width="769.1" height="2" fill="#6b5cf0"/><g font-family="Liberation Sans" font-size="23" fill="#8e8e92"><text x="1797.2" y="1126" text-anchor="middle">Jan</text><text x="1860.2" y="1126" text-anchor="middle">Feb</text><text x="1925.3" y="1126" text-anchor="middle">Mar</text><text x="1989.4" y="1126" text-anchor="middle">Apr</text><text x="2055.0" y="1126" text-anchor="middle">May</text><text x="2121.2" y="1126" text-anchor="middle">Jun</text><text x="2181.3" y="1126" text-anchor="middle">Jul</text><text x="2242.6" y="1126" text-anchor="middle">Aug</text><text x="2309.4" y="1126" text-anchor="middle">Sep</text><text x="2373.7" y="1126" text-anchor="middle">Oct</text><text x="2438.2" y="1126" text-anchor="middle">Nov</text><text x="2505.4" y="1126" text-anchor="middle">Dec</text></g><path d="M2678.70 1084.00V936.30Q2678.70 932.30 2682.70 932.30H2712.00Q2716.00 932.30 2716.00 936.30V1084.00Z" fill="#03c7a1"/><path d="M2743.25 1084.00V846.90Q2743.25 842.90 2747.25 842.90H2776.55Q2780.55 842.90 2780.55 846.90V1084.00Z" fill="#03c7a1"/><path d="M2807.80 1084.00V919.90Q2807.80 915.90 2811.80 915.90H2841.10Q2845.10 915.90 2845.10 919.90V1084.00Z" fill="#03c7a1"/><path d="M2872.35 1084.00V881.80Q2872.35 877.80 2876.35 877.80H2905.65Q2909.65 877.80 2909.65 881.80V1084.00Z" fill="#03c7a1"/><path d="M2936.90 1084.00V936.30Q2936.90 932.30 2940.90 932.30H2970.20Q2974.20 932.30 2974.20 936.30V1084.00Z" fill="#03c7a1"/><path d="M3001.45 1084.00V898.20Q3001.45 894.20 3005.45 894.20H3034.75Q3038.75 894.20 3038.75 898.20V1084.00Z" fill="#03c7a1"/><path d="M3066.00 1084.00V857.60Q3066.00 853.60 3070.00 853.60H3099.30Q3103.30 853.60 3103.30 857.60V1084.00Z" fill="#03c7a1"/><path d="M3130.55 1084.00V806.30Q3130.55 802.30 3134.55 802.30H3163.85Q3167.85 802.30 3167.85 806.30V1084.00Z" fill="#03c7a1"/><path d="M3195.10 1084.00V881.80Q3195.10 877.80 3199.10 877.80H3228.40Q3232.40 877.80 3232.40 881.80V1084.00Z" fill="#03c7a1"/><path d="M3259.65 1084.00V827.60Q3259.65 823.60 3263.65 823.60H3292.95Q3296.95 823.60 3296.95 827.60V1084.00Z" fill="#03c7a1"/><path d="M3324.20 1084.00V806.30Q3324.20 802.30 3328.20 802.30H3357.50Q3361.50 802.30 3361.50 806.30V1084.00Z" fill="#03c7a1"/><path d="M3388.75 1084.00V751.80Q3388.75 747.80 3392.75 747.80H3422.05Q3426.05 747.80 3426.05 751.80V1084.00Z" fill="#03c7a1"/><rect x="2667.7" y="1083" width="768.7" height="2" fill="#0fae90"/><g font-family="Liberation Sans" font-size="23" fill="#8e8e92"><text x="2696.4" y="1126" text-anchor="middle">Jan</text><text x="2759.4" y="1126" text-anchor="middle">Feb</text><text x="2824.5" y="1126" text-anchor="middle">Mar</text><text x="2888.6" y="1126" text-anchor="middle">Apr</text><text x="2954.2" y="1126" text-anchor="middle">May</text><text x="3020.4" y="1126" text-anchor="middle">Jun</text><text x="3080.5" y="1126" text-anchor="middle">Jul</text><text x="3141.8" y="1126" text-anchor="middle">Aug</text><text x="3208.6" y="1126" text-anchor="middle">Sep</text><text x="3272.9" y="1126" text-anchor="middle">Oct</text><text x="3337.4" y="1126" text-anchor="middle">Nov</text><text x="3404.6" y="1126" text-anchor="middle">Dec</text></g></svg>
<div class="abs" style="left:826.6px;top:1215.5px;width:1304.4px;height:656.5px;background:#ffffff;border:2px solid #ececec;border-radius:16px;box-shadow:0 2px 4px rgba(0,0,0,0.035);overflow:hidden"></div>
<div class="abs" style="left:869.2px;top:1258.0px;width:53.0px;height:53.0px;background:#f8f8f8;border:2px solid #e8e8e8;border-radius:9px"></div>
<svg class="abs" style="left:869.2px;top:1258.0px;" width="53" height="53" viewBox="0 0 53 53"><g fill="none" stroke="#67646a" stroke-width="2" stroke-linecap="round" stroke-linejoin="round"><path d="M11.7 20A3.3 3.3 0 0 1 13.8 13.6H33.8A4 4 0 0 1 37.8 17.6V33.9M13.8 13.6A3.5 3.5 0 0 1 17.4 17.1V36A3.7 3.7 0 0 0 21.1 39.7H37.4A2.9 2.9 0 0 0 37.4 33.9H23.6A2.9 2.9 0 0 1 21.1 39.7M23.2 23.2H33.1M23.2 28H33.1"/></g></svg>
<div class="t" style="top:1265.1px;font-size:42px;line-height:42px;color:#3a3a3c;letter-spacing:0.14px;left:945.6px;">Aging accounts receivables</div>
<div class="abs" style="left:869.2px;top:1356.0px;width:1218.3px;height:16.0px;background:#e6e6e4;border-radius:8px"></div>
<div class="abs" style="left:1511.8px;top:1356.0px;width:575.7px;height:16.0px;background:#fdc94a;border-radius:0 8px 8px 0"></div>
<div class="abs" style="left:1918.6px;top:1356.0px;width:168.9px;height:16.0px;background:#ee7d21;border-radius:0 8px 8px 0"></div>
<div class="abs" style="left:872.0px;top:1427.5px;width:26.6px;height:26.6px;background:#e6e6e4;border-radius:50%"></div>
<div class="t" style="top:1422.4px;font-size:38px;line-height:38px;color:#3a3a3c;letter-spacing:-0.75px;left:918.0px;">1 to 30 days</div>
<div class="t" style="top:1422.4px;font-size:38px;line-height:38px;color:#3a3a3c;letter-spacing:-1.35px;right:1754.2px;">$134,252.14</div>
<div class="abs" style="left:872.0px;top:1510.2px;width:26.6px;height:26.6px;background:#fdc94a;border-radius:50%"></div>
<div class="t" style="top:1505.1px;font-size:38px;line-height:38px;color:#3a3a3c;letter-spacing:-0.75px;left:918.0px;">31 to 60 days</div>
<div class="t" style="top:1505.1px;font-size:38px;line-height:38px;color:#3a3a3c;letter-spacing:-1.35px;right:1754.2px;">$42,970.52</div>
<div class="abs" style="left:872.0px;top:1592.8px;width:26.6px;height:26.6px;background:#ee7d21;border-radius:50%"></div>
<div class="t" style="top:1587.7px;font-size:38px;line-height:38px;color:#3a3a3c;letter-spacing:-0.75px;left:918.0px;">61 to 90 days</div>
<div class="t" style="top:1587.7px;font-size:38px;line-height:38px;color:#3a3a3c;letter-spacing:-1.35px;right:1754.2px;">$13,580.25</div>
<div class="abs" style="left:872.0px;top:1675.5px;width:26.6px;height:26.6px;background:#e0161d;border-radius:50%"></div>
<div class="t" style="top:1670.4px;font-size:38px;line-height:38px;color:#3a3a3c;letter-spacing:-0.75px;left:918.0px;">More that 90 days</div>
<div class="t" style="top:1670.4px;font-size:38px;line-height:38px;color:#3a3a3c;letter-spacing:-1.35px;right:1754.2px;">$5,751.06</div>
<div class="abs" style="left:869.0px;top:1745.5px;width:1261.0px;height:2.0px;background:#ececec"></div>
<div class="t" style="top:1786.6px;font-size:38px;line-height:38px;color:#333335;letter-spacing:-0.15px;left:869.8px;-webkit-text-stroke:0.5px #333335">Total accounts receivable</div>
<div class="abs" style="left:826.6px;top:1700px;width:1303.4px;height:171px;overflow:hidden;border-radius:0 0 14px 14px"><div class="t" style="top:86.6px;font-size:38px;line-height:38px;color:#333335;letter-spacing:-0.5px;left:1230.4px;-webkit-text-stroke:0.5px #333335">$196,554.00</div>
</div>
<div class="abs" style="left:2175.0px;top:1215.6px;width:1305.0px;height:656.4px;background:#ffffff;border:2px solid #ececec;border-radius:16px;box-shadow:0 2px 4px rgba(0,0,0,0.035);"></div>
<div class="abs" style="left:2218.0px;top:1258.5px;width:53.0px;height:53.0px;background:#f8f8f8;border:2px solid #e8e8e8;border-radius:9px"></div>
<svg class="abs" style="left:2218.0px;top:1258.5px;" width="53" height="53" viewBox="0 0 53 53"><g fill="none" stroke="#67646a" stroke-width="2" stroke-linecap="round" stroke-linejoin="round"><path d="M20.4 17.4H40.6M20.4 26.8H40.6M20.4 36.3H40.6"/><circle cx="14.5" cy="17.4" r="1.7" fill="#67646a" stroke="none"/><circle cx="14.5" cy="26.8" r="1.7" fill="#67646a" stroke="none"/><circle cx="14.5" cy="36.3" r="1.7" fill="#67646a" stroke="none"/></g></svg>
<div class="t" style="top:1265.9px;font-size:42px;line-height:42px;color:#3a3a3c;letter-spacing:0.5px;left:2295.0px;">4 tasks to complete</div>
<div class="abs" style="left:2218.0px;top:1355.5px;width:1260.0px;height:2.0px;background:#efefef"></div>
<div class="abs" style="left:2218.0px;top:1471.5px;width:1260.0px;height:2.0px;background:#efefef"></div>
<div class="abs" style="left:2218.0px;top:1587.5px;width:1260.0px;height:2.0px;background:#efefef"></div>
<div class="abs" style="left:2218.0px;top:1704.0px;width:1260.0px;height:2.0px;background:#efefef"></div>
<svg class="abs" style="left:2214.0px;top:1390.0px;" width="50" height="50" viewBox="0 0 50 50"><path d="M17.2 9.9H29.1L37.2 18V29.9L29.1 38.4H17.2L8.8 29.9V18Z" fill="none" stroke="#dc1414" stroke-width="2" stroke-linejoin="round"/><path d="M23 16.9V25.8" stroke="#dc1414" stroke-width="2.1" stroke-linecap="round"/><circle cx="23" cy="30.9" r="1.8" fill="#dc1414"/></svg>
<div class="t" style="left:2278.3px;top:1396.4px;font-size:38px;line-height:38px;color:#6f6f74;letter-spacing:0.7px"><span style="color:#353537;-webkit-text-stroke:0.6px #353537">Data loaders</span>&nbsp;2 not responding</div>
<svg class="abs" style="left:3390.0px;top:1390.0px;" width="50" height="50" viewBox="0 0 50 50"><path d="M10.1 24.3H40.3M27.9 11.7L40.3 24.3L27.9 36.6" fill="none" stroke="#67646a" stroke-width="2" stroke-linecap="round" stroke-linejoin="round"/></svg>
<svg class="abs" style="left:2214.0px;top:1506.2px;" width="50" height="50" viewBox="0 0 50 50"><path d="M21 12.3Q23 9 25 12.3L37.5 34Q39.2 37.4 35.5 37.4H10.5Q6.8 37.4 8.5 34Z" fill="none" stroke="#67646a" stroke-width="2" stroke-linejoin="round"/><path d="M23 20.5V27.1" stroke="#67646a" stroke-width="2" stroke-linecap="round"/><circle cx="23" cy="32.2" r="1.8" fill="#67646a"/></svg>
<div class="t" style="left:2278.3px;top:1512.6px;font-size:38px;line-height:38px;color:#6f6f74;letter-spacing:0.7px"><span style="color:#353537;-webkit-text-stroke:0.6px #353537">Missing payment methods</span>&nbsp;12 active customers</div>
<svg class="abs" style="left:3390.0px;top:1506.2px;" width="50" height="50" viewBox="0 0 50 50"><path d="M10.1 24.3H40.3M27.9 11.7L40.3 24.3L27.9 36.6" fill="none" stroke="#67646a" stroke-width="2" stroke-linecap="round" stroke-linejoin="round"/></svg>
<svg class="abs" style="left:2214.0px;top:1622.3px;" width="50" height="50" viewBox="0 0 50 50"><circle cx="23" cy="24.6" r="14" fill="none" stroke="#67646a" stroke-width="2"/><path d="M21.7 23.6Q23.1 23.8 23.1 25V31.1Q23.1 32.2 24.5 32.2" fill="none" stroke="#67646a" stroke-width="2" stroke-linecap="round" stroke-linejoin="round"/><circle cx="22.5" cy="18.2" r="1.7" fill="#67646a"/></svg>
<div class="t" style="left:2278.3px;top:1628.7px;font-size:38px;line-height:38px;color:#6f6f74;letter-spacing:0.7px"><span style="color:#353537;-webkit-text-stroke:0.6px #353537">Late invoices</span>&nbsp;27 invoices late</div>
<svg class="abs" style="left:3390.0px;top:1622.3px;" width="50" height="50" viewBox="0 0 50 50"><path d="M10.1 24.3H40.3M27.9 11.7L40.3 24.3L27.9 36.6" fill="none" stroke="#67646a" stroke-width="2" stroke-linecap="round" stroke-linejoin="round"/></svg>
<svg class="abs" style="left:2214.0px;top:1738.5px;" width="50" height="50" viewBox="0 0 50 50"><circle cx="23" cy="24.6" r="14" fill="none" stroke="#67646a" stroke-width="2"/><path d="M21.7 23.6Q23.1 23.8 23.1 25V31.1Q23.1 32.2 24.5 32.2" fill="none" stroke="#67646a" stroke-width="2" stroke-linecap="round" stroke-linejoin="round"/><circle cx="22.5" cy="18.2" r="1.7" fill="#67646a"/></svg>
<div class="t" style="left:2278.3px;top:1744.9px;font-size:38px;line-height:38px;color:#6f6f74;letter-spacing:0.7px"><span style="color:#353537;-webkit-text-stroke:0.6px #353537">Draft invoices</span>&nbsp;14 to review</div>
<svg class="abs" style="left:3390.0px;top:1738.5px;" width="50" height="50" viewBox="0 0 50 50"><path d="M10.1 24.3H40.3M27.9 11.7L40.3 24.3L27.9 36.6" fill="none" stroke="#67646a" stroke-width="2" stroke-linecap="round" stroke-linejoin="round"/></svg>
<div class="abs" style="left:826.6px;top:1916.6px;width:2653.4px;height:543.4px;background:#ffffff;border:2px solid #ececec;border-radius:16px;box-shadow:0 2px 4px rgba(0,0,0,0.035);"></div>
<div class="abs" style="left:869.0px;top:1965.5px;width:53.0px;height:53.0px;background:#f8f8f8;border:2px solid #e8e8e8;border-radius:9px"></div>
<svg class="abs" style="left:869.0px;top:1965.5px;" width="53" height="53" viewBox="0 0 53 53"><g fill="none" stroke="#67646a" stroke-width="2" stroke-linecap="round" stroke-linejoin="round"><path d="M11.7 20A3.3 3.3 0 0 1 13.8 13.6H33.8A4 4 0 0 1 37.8 17.6V33.9M13.8 13.6A3.5 3.5 0 0 1 17.4 17.1V36A3.7 3.7 0 0 0 21.1 39.7H37.4A2.9 2.9 0 0 0 37.4 33.9H23.6A2.9 2.9 0 0 1 21.1 39.7M23.2 23.2H33.1M23.2 28H33.1"/></g></svg>
<div class="t" style="top:1972.4px;font-size:42px;line-height:42px;color:#3a3a3c;letter-spacing:0.4px;left:945.6px;">7 contracts renewing</div>
<div class="abs" style="left:3157.6px;top:1960.2px;width:278.9px;height:64.2px;background:#ffffff;border:2px solid #e4e4e4;border-radius:10px;box-shadow:0 2px 2px rgba(0,0,0,0.05)"></div>
<div class="t" style="top:1975.2px;font-size:34px;line-height:34px;color:#3a3a3c;letter-spacing:0.1px;left:3174.4px;-webkit-text-stroke:0.4px #3a3a3c">Next 30 days</div>
<svg class="abs" style="left:3391.0px;top:1986.0px;" width="26" height="16" viewBox="0 0 26 16"><path d="M2 2L13.0 14L24 2" fill="none" stroke="#5f6170" stroke-width="2" stroke-linecap="round" stroke-linejoin="round"/></svg>
<div class="abs" style="left:869.8px;top:2068.8px;width:2566.7px;height:391.2px;background:#ffffff;border:2px solid #ececec;border-radius:12px;overflow:hidden"></div>
<div class="abs" style="left:871.8px;top:2070.8px;width:2562.7px;height:94.2px;background:#f8f8f8;border-radius:10px 10px 0 0"></div>
<div class="abs" style="left:871.8px;top:2165.0px;width:2562.7px;height:2.0px;background:#ececec"></div>
<div class="abs" style="left:871.8px;top:2283.0px;width:2562.7px;height:2.0px;background:#efefef"></div>
<div class="t" style="top:2100.1px;font-size:33px;line-height:33px;color:#6f6f74;letter-spacing:0.8px;left:923.5px;">Customer</div>
<div class="t" style="top:2100.1px;font-size:33px;line-height:33px;color:#6f6f74;letter-spacing:0.8px;left:1682.9px;">Subscription</div>
<div class="t" style="top:2100.1px;font-size:33px;line-height:33px;color:#6f6f74;letter-spacing:0.9px;left:2309.0px;">Method</div>
<div class="t" style="top:2100.1px;font-size:33px;line-height:33px;color:#6f6f74;letter-spacing:0.3px;right:461.5px;">Renewal</div>
<div class="abs" style="left:923.5px;top:2193.4px;width:229.7px;height:64.0px;background:#ffffff;border:2px solid #e6e6e6;border-radius:9px;box-shadow:0 2px 2px rgba(0,0,0,0.04)"></div>
<svg class="abs" style="left:930.0px;top:2200.0px;" width="60" height="60" viewBox="0 0 60 60"><rect x="9.7" y="6.7" width="37.3" height="37.5" rx="5" fill="#ee7a1a"/><path d="M21.2 17.3H35.7V19.1H21.2ZM21.2 21.2H35.7V22.8H21.2ZM21.2 24.8H35.7V34.1L28.5 29.4L21.2 34.1Z" fill="#f4f4f4"/></svg>
<div class="t" style="top:2207.1px;font-size:36px;line-height:36px;color:#2f2f31;letter-spacing:-0.86px;left:994.3px;-webkit-text-stroke:0.4px #2f2f31">Substack</div>
<div class="abs" style="left:1683.0px;top:2193.4px;width:380.7px;height:64.0px;background:#ffffff;border:2px solid #e6e6e6;border-radius:9px;box-shadow:0 2px 2px rgba(0,0,0,0.04)"></div>
<div class="abs" style="left:1698.4px;top:2214.4px;width:22.2px;height:22.2px;background:#119b1d;border-radius:50%"></div>
<div class="t" style="top:2208.0px;font-size:35px;line-height:35px;color:#2f2f31;letter-spacing:-0.6px;left:1737.0px;-webkit-text-stroke:0.4px #2f2f31">Enterprise</div>
<div class="abs" style="left:1909.5px;top:2207.4px;width:2.0px;height:36.0px;background:#ececec"></div>
<div class="t" style="top:2208.0px;font-size:35px;line-height:35px;color:#6f6f74;letter-spacing:-1.2px;left:1928.0px;">$48,105</div>
<div class="abs" style="left:2310.0px;top:2193.4px;width:203.0px;height:64.0px;background:#f6f6f6;border:2px solid #eaeaea;border-radius:9px"></div>
<div class="t" style="top:2208.0px;font-size:35px;line-height:35px;color:#2f2f31;letter-spacing:-0.3px;left:2326.5px;-webkit-text-stroke:0.4px #2f2f31">Automated</div>
<div class="t" style="right:460.4px;top:2206.4px;font-size:38px;line-height:38px;color:#6f6f74;letter-spacing:-0.87px">in 2 days&nbsp;<span style="color:#2f2f31;-webkit-text-stroke:0.6px #2f2f31">May 31</span></div>
<div class="abs" style="left:923.5px;top:2312.4px;width:190.9px;height:64.0px;background:#ffffff;border:2px solid #e6e6e6;border-radius:9px;box-shadow:0 2px 2px rgba(0,0,0,0.04)"></div>
<svg class="abs" style="left:930.0px;top:2319.0px;" width="60" height="60" viewBox="0 0 60 60"><rect x="9.5" y="6.7" width="37.7" height="37.7" rx="5.5" fill="#17161f"/><path d="M17.1 19.8L22.6 25.8V35.7L17.1 31Z" fill="#10a898"/><path d="M17.1 19.4L20.6 15.3L28.4 22.6V30.2Z" fill="#3ad4b6"/><path d="M28.4 22.6L35.9 15.7L39.9 19.6L28.4 30.6Z" fill="#b8ef3a"/><path d="M34.1 25.8L39.9 20.2V31L34.1 35.9Z" fill="#e8692a"/></svg>
<div class="t" style="top:2326.1px;font-size:36px;line-height:36px;color:#2f2f31;letter-spacing:-0.86px;left:994.3px;-webkit-text-stroke:0.4px #2f2f31">Monzo</div>
<div class="abs" style="left:1683.0px;top:2312.4px;width:388.0px;height:64.0px;background:#ffffff;border:2px solid #e6e6e6;border-radius:9px;box-shadow:0 2px 2px rgba(0,0,0,0.04)"></div>
<div class="abs" style="left:1698.4px;top:2333.4px;width:22.2px;height:22.2px;background:#119b1d;border-radius:50%"></div>
<div class="t" style="top:2327.0px;font-size:35px;line-height:35px;color:#2f2f31;letter-spacing:-0.6px;left:1737.0px;-webkit-text-stroke:0.4px #2f2f31">Enterprise</div>
<div class="abs" style="left:1909.5px;top:2326.4px;width:2.0px;height:36.0px;background:#ececec"></div>
<div class="t" style="top:2327.0px;font-size:35px;line-height:35px;color:#6f6f74;letter-spacing:-1.2px;left:1928.0px;">$25,205</div>
<div class="abs" style="left:2310.0px;top:2312.4px;width:144.0px;height:64.0px;background:#f6f6f6;border:2px solid #eaeaea;border-radius:9px"></div>
<div class="t" style="top:2327.0px;font-size:35px;line-height:35px;color:#2f2f31;letter-spacing:-0.3px;left:2326.5px;-webkit-text-stroke:0.4px #2f2f31">Manual</div>
<div class="t" style="right:460.4px;top:2325.4px;font-size:38px;line-height:38px;color:#6f6f74;letter-spacing:-0.87px">in 3 days&nbsp;<span style="color:#2f2f31;-webkit-text-stroke:0.6px #2f2f31">June 1</span></div>

</body></html>
